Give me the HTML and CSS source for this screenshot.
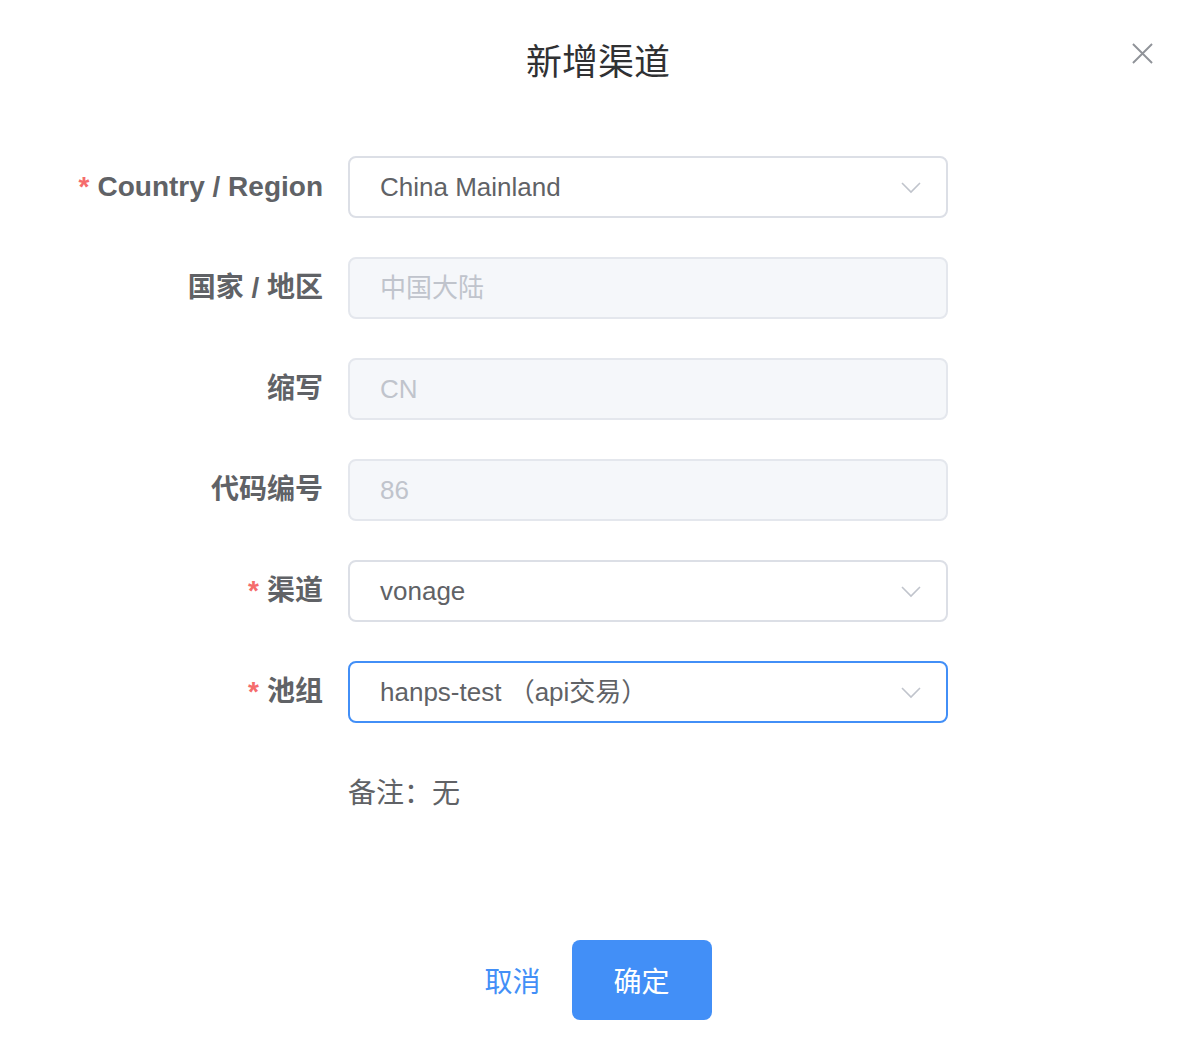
FILE: index.html
```html
<!DOCTYPE html>
<html lang="zh-CN">
<head>
<meta charset="utf-8">
<title>新增渠道</title>
<link rel="stylesheet" href="styles.css">
</head>
<body>
<div class="dialog">
  <div class="header">
    <span class="title">新增渠道</span>
    <button class="close" aria-label="关闭">
      <svg width="22" height="22" viewBox="0 0 22 22"><path d="M1 1 L21 21 M21 1 L1 21" stroke="#909399" stroke-width="2" fill="none"/></svg>
    </button>
  </div>
  <div class="form">
    <div class="row">
      <label class="label required">Country / Region</label>
      <div class="control input">
        <span class="value">China Mainland</span>
        <svg class="chev" width="20" height="12" viewBox="0 0 20 12"><path d="M1 1 L10 10 L19 1" stroke="#c0c4cc" stroke-width="1.6" fill="none"/></svg>
      </div>
    </div>
    <div class="row">
      <label class="label">国家 / 地区</label>
      <div class="control input disabled"><span class="value">中国大陆</span></div>
    </div>
    <div class="row">
      <label class="label">缩写</label>
      <div class="control input disabled"><span class="value">CN</span></div>
    </div>
    <div class="row">
      <label class="label">代码编号</label>
      <div class="control input disabled"><span class="value">86</span></div>
    </div>
    <div class="row">
      <label class="label required">渠道</label>
      <div class="control input">
        <span class="value">vonage</span>
        <svg class="chev" width="20" height="12" viewBox="0 0 20 12"><path d="M1 1 L10 10 L19 1" stroke="#c0c4cc" stroke-width="1.6" fill="none"/></svg>
      </div>
    </div>
    <div class="row">
      <label class="label required">池组</label>
      <div class="control input focus">
        <span class="value">hanps-test （api交易）</span>
        <svg class="chev" width="20" height="12" viewBox="0 0 20 12"><path d="M1 1 L10 10 L19 1" stroke="#c0c4cc" stroke-width="1.6" fill="none"/></svg>
      </div>
    </div>
    <div class="row">
      <span class="label"></span>
      <div class="control remark">备注：无</div>
    </div>
  </div>
  <div class="footer">
    <button class="btn-text">取消</button>
    <button class="btn-primary">确定</button>
  </div>
</div>
</body>
</html>
```
FILE: styles.css
```css
* { box-sizing: border-box; }
html, body { margin: 0; padding: 0; background: #fff; }
body {
  font-family: "Liberation Sans", "Noto Sans CJK SC", sans-serif;
  color: #606266;
}
.dialog {
  width: 1194px;
  height: 1058px;
  display: flex;
  flex-direction: column;
}
.header {
  position: relative;
  height: 120px;
  display: flex;
  align-items: center;
  justify-content: center;
}
.title {
  font-family: "Noto Sans CJK SC", sans-serif;
  font-size: 36px;
  color: #303133;
  line-height: 48px;
  margin-top: -2px;
  padding-left: 2px;
}
.close {
  position: absolute;
  top: 43px;
  right: 41px;
  width: 21px;
  height: 21px;
  padding: 0;
  border: 0;
  background: none;
  display: flex;
}
.close svg { width: 21px; height: 21px; }
.form {
  padding-top: 36px;
  display: flex;
  flex-direction: column;
  gap: 39px;
}
.row {
  display: flex;
  align-items: center;
  height: 62px;
}
.label {
  width: 348px;
  padding-right: 25px;
  text-align: right;
  font-size: 28px;
  font-weight: bold;
  color: #606266;
  line-height: 62px;
}
.label.required::before {
  content: "*";
  color: #f56c6c;
  margin-right: 8px;
}
.control { width: 600px; height: 62px; }
.input {
  display: flex;
  align-items: center;
  justify-content: space-between;
  border: 2px solid #dcdfe6;
  border-radius: 8px;
  padding: 0 25px 0 30px;
  font-size: 26px;
  color: #606266;
  background: #fff;
}
.input .value { line-height: 58px; }
.input.disabled {
  background: #f5f7fa;
  border-color: #e4e7ed;
  color: #c0c4cc;
}
.input.focus { border-color: #428ff7; }
.chev { display: block; margin-top: 2px; }
.remark {
  font-family: "Noto Sans CJK SC", sans-serif;
  font-size: 28px;
  line-height: 62px;
  color: #606266;
  margin-top: -5px;
}
.footer {
  margin-top: 116px;
  display: flex;
  justify-content: center;
  align-items: center;
  gap: 19px;
  padding-right: 10px;
}
.btn-text, .btn-primary {
  font-family: "Noto Sans CJK SC", sans-serif;
  font-size: 28px;
  border: 0;
  cursor: pointer;
}
.btn-text {
  background: none;
  color: #428ff7;
  padding: 0 12px;
  height: 80px;
}
.btn-primary {
  width: 140px;
  height: 80px;
  background: #428ff7;
  color: #fff;
  border-radius: 8px;
}
```
